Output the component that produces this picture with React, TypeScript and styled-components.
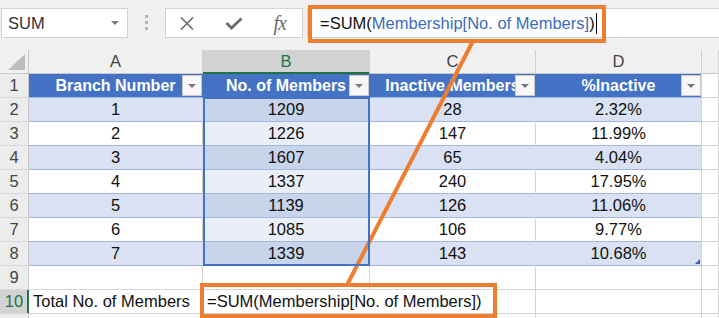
import React from 'react';
import styled, { createGlobalStyle, css } from 'styled-components';

const GlobalStyle = createGlobalStyle`
  html, body {
    margin: 0;
    padding: 0;
    background: #fff;
    overflow: hidden;
  }
  body {
    font-family: 'Liberation Sans', Arial, sans-serif;
  }
`;

const ORANGE = '#ed7d31';
const BLUE = '#4472c4';
const GREEN = '#217346';
const GRID = '#d4d4d4';
const BAND_LINE = '#a3b8df';

const rows = [
  [1, 1209, 28, '2.32%'],
  [2, 1226, 147, '11.99%'],
  [3, 1607, 65, '4.04%'],
  [4, 1337, 240, '17.95%'],
  [5, 1139, 126, '11.06%'],
  [6, 1085, 106, '9.77%'],
  [7, 1339, 143, '10.68%']
];

const Window = styled.div`
  position: relative;
  width: 719px;
  height: 318px;
  overflow: hidden;
  background: #fff;
`;

const FormulaBar = styled.div`
  display: flex;
  align-items: flex-start;
  height: 50px;
  padding: 8px 0 0 1px;
  box-sizing: border-box;
  background: #f0f0f0;
`;

const NameBox = styled.div`
  display: flex;
  align-items: center;
  justify-content: space-between;
  width: 127px;
  height: 30px;
  box-sizing: border-box;
  padding: 0 8px 0 6px;
  background: #fff;
  border: 1px solid #d2d2d2;
  font-size: 16.5px;
  color: #333;
`;

const Caret = styled.span<{ $size?: number }>`
  display: inline-block;
  width: 0;
  height: 0;
  border-left: ${(p) => p.$size ?? 4}px solid transparent;
  border-right: ${(p) => p.$size ?? 4}px solid transparent;
  border-top: ${(p) => p.$size ?? 4}px solid #7a7a7a;
`;

const Grip = styled.div`
  display: flex;
  flex-direction: column;
  align-items: center;
  gap: 3px;
  width: 37px;
  padding-top: 7px;

  & > span {
    width: 3px;
    height: 3px;
    background: #b4b4b4;
  }
`;

const Buttons = styled.div`
  display: flex;
  align-items: center;
  justify-content: space-between;
  width: 138px;
  height: 30px;
  box-sizing: border-box;
  padding: 0 16px 0 14px;
  background: #fff;
  border: 1px solid #d2d2d2;
`;

const Fx = styled.span`
  font-family: 'Liberation Serif', 'Times New Roman', serif;
  font-style: italic;
  font-size: 20px;
  color: #6b6b6b;
  letter-spacing: -1px;
`;

const FormulaInput = styled.div`
  display: flex;
  align-items: center;
  flex: 1;
  height: 30px;
  margin-left: 4px;
  box-sizing: border-box;
  padding-left: 12px;
  background: #fff;
  border: 1px solid #d2d2d2;
  border-right: none;
  font-size: 16.5px;
  color: #111;
  white-space: nowrap;
`;

const Ref = styled.span`
  color: #3c6db8;
`;

const Cursor = styled.span`
  display: inline-block;
  width: 1px;
  height: 21px;
  margin-left: 1px;
  background: #000;
`;

const Sheet = styled.div`
  display: grid;
  grid-template-columns: 29px 174px 167px 166px 166px 1fr;
  grid-auto-rows: 24px;
  font-size: 16.5px;
  color: #111;
`;

const centered = css`
  display: flex;
  align-items: center;
  justify-content: center;
  box-sizing: border-box;
  white-space: nowrap;
`;

const Corner = styled.div`
  ${centered};
  justify-content: flex-end;
  align-items: flex-end;
  padding: 0 3px 3px 0;
  background: #f0f0f0;
  border-right: 1px solid #c8c8c8;
  border-bottom: 1px solid #c8c8c8;
`;

const ColHead = styled.div<{ $active?: boolean }>`
  ${centered};
  background: ${(p) => (p.$active ? '#d2d2d2' : '#f0f0f0')};
  color: ${(p) => (p.$active ? GREEN : '#444')};
  border-right: 1px solid #d0d0d0;
  border-bottom: 1px solid ${(p) => (p.$active ? GREEN : '#c8c8c8')};
  box-shadow: ${(p) => (p.$active ? `inset 0 -1px 0 ${GREEN}` : 'none')};
`;

const RowHead = styled.div<{ $active?: boolean }>`
  ${centered};
  background: ${(p) => (p.$active ? '#d2d2d2' : '#ececec')};
  color: ${(p) => (p.$active ? GREEN : '#444')};
  border-right: 1px solid ${(p) => (p.$active ? GREEN : '#c8c8c8')};
  border-bottom: 1px solid #d8d8d8;
  box-shadow: ${(p) => (p.$active ? `inset -1px 0 0 ${GREEN}` : 'none')};
`;

const TableHead = styled.div<{ $edge?: boolean }>`
  ${centered};
  position: relative;
  background: ${BLUE};
  color: #fff;
  font-size: 16px;
  font-weight: bold;
  border-right: 1px solid ${(p) => (p.$edge ? GRID : BLUE)};
  border-bottom: 1px solid ${BAND_LINE};
`;

const FilterButton = styled.span`
  ${centered};
  position: absolute;
  right: 0;
  top: 1px;
  width: 20px;
  height: 21px;
  background: #f7f7f7;
  border: 1px solid #c9c9c9;
`;

const DataCell = styled.div<{
  $band: boolean;
  $picked?: boolean;
  $first?: boolean;
  $last?: boolean;
  $edge?: boolean;
}>`
  ${centered};
  position: relative;
  background: ${(p) =>
    p.$picked ? (p.$band ? '#c8d4eb' : '#e9eef8') : p.$band ? '#d9e1f2' : '#fff'};
  border-right: 1px solid
    ${(p) => (p.$edge || !p.$band ? GRID : '#d9e1f2')};
  border-bottom: 1px solid ${BAND_LINE};

  ${(p) =>
    p.$picked &&
    css`
      &::after {
        content: '';
        position: absolute;
        z-index: 2;
        left: 0;
        right: -1px;
        top: ${p.$first ? '-1px' : '0'};
        bottom: -1px;
        border-left: 2px solid ${BLUE};
        border-right: 2px solid ${BLUE};
        border-top: ${p.$first ? `2px solid ${BLUE}` : 'none'};
        border-bottom: ${p.$last ? `2px solid ${BLUE}` : 'none'};
        pointer-events: none;
      }
    `}
`;

const ResizeHandle = styled.span`
  position: absolute;
  right: 1px;
  bottom: 1px;
  width: 5px;
  height: 5px;
  background: #3a5fa6;
  clip-path: polygon(100% 0, 100% 100%, 0 100%);
`;

const PlainCell = styled.div<{ $left?: boolean; $span?: number }>`
  ${centered};
  justify-content: ${(p) => (p.$left ? 'flex-start' : 'center')};
  padding-left: ${(p) => (p.$left ? '4px' : '0')};
  grid-column: ${(p) => (p.$span ? `span ${p.$span}` : 'auto')};
  background: #fff;
  border-right: 1px solid ${GRID};
  border-bottom: 1px solid ${GRID};
`;

const Annotations = styled.svg`
  position: absolute;
  left: 0;
  top: 0;
  pointer-events: none;
`;

const CloseIcon = () => (
  <svg width="14" height="13" viewBox="0 0 14 13">
    <path d="M1 0.5 L13 12.5 M13 0.5 L1 12.5" stroke="#6b6b6b" strokeWidth="1.6" fill="none" />
  </svg>
);

const CheckIcon = () => (
  <svg width="18" height="13" viewBox="0 0 18 13">
    <path d="M1.5 6 L6.5 11 L16.5 1.5" stroke="#6b6b6b" strokeWidth="2.8" fill="none" />
  </svg>
);

const CornerMark = () => (
  <svg width="17" height="16" viewBox="0 0 17 16">
    <polygon points="0,16 17,16 17,0" fill="#bdbdbd" />
  </svg>
);

const headers = ['Branch Number', 'No. of Members', 'Inactive Members', '%Inactive'];

const App = () => {
  return (
    <Window>
      <GlobalStyle />
      <FormulaBar>
        <NameBox>
          SUM
          <Caret />
        </NameBox>
        <Grip>
          <span />
          <span />
          <span />
        </Grip>
        <Buttons>
          <CloseIcon />
          <CheckIcon />
          <Fx>fx</Fx>
        </Buttons>
        <FormulaInput>
          =SUM(<Ref>Membership[No. of Members]</Ref>)
          <Cursor />
        </FormulaInput>
      </FormulaBar>

      <Sheet>
        <Corner>
          <CornerMark />
        </Corner>
        {['A', 'B', 'C', 'D', ''].map((c) => (
          <ColHead key={c || 'E'} $active={c === 'B'}>
            {c}
          </ColHead>
        ))}

        <RowHead>1</RowHead>
        {headers.map((h, i) => (
          <TableHead key={h} $edge={i === 3}>
            {h}
            <FilterButton>
              <Caret $size={4} />
            </FilterButton>
          </TableHead>
        ))}
        <PlainCell />

        {rows.map((r, i) => {
          const band = i % 2 === 0;
          return (
            <React.Fragment key={i}>
              <RowHead>{i + 2}</RowHead>
              <DataCell $band={band}>{r[0]}</DataCell>
              <DataCell $band={band} $picked $first={i === 0} $last={i === rows.length - 1}>
                {r[1]}
              </DataCell>
              <DataCell $band={band}>{r[2]}</DataCell>
              <DataCell $band={band} $edge>
                {r[3]}
                {i === rows.length - 1 && <ResizeHandle />}
              </DataCell>
              <PlainCell />
            </React.Fragment>
          );
        })}

        <RowHead>9</RowHead>
        <PlainCell />
        <PlainCell />
        <PlainCell />
        <PlainCell />
        <PlainCell />

        <RowHead $active>10</RowHead>
        <PlainCell $left>Total No. of Members</PlainCell>
        <PlainCell $left $span={2}>
          =SUM(Membership[No. of Members])
        </PlainCell>
        <PlainCell />
        <PlainCell />

        <RowHead />
        <PlainCell />
        <PlainCell />
        <PlainCell />
        <PlainCell />
        <PlainCell />
      </Sheet>

      <Annotations width="719" height="318" viewBox="0 0 719 318">
        <line x1="473" y1="41" x2="347" y2="285" stroke={ORANGE} strokeWidth="4" />
        <rect x="310" y="7" width="294" height="34" fill="none" stroke={ORANGE} strokeWidth="4" />
        <rect x="202" y="285" width="293" height="31" fill="none" stroke={ORANGE} strokeWidth="4" />
      </Annotations>
    </Window>
  );
};

export default App;
